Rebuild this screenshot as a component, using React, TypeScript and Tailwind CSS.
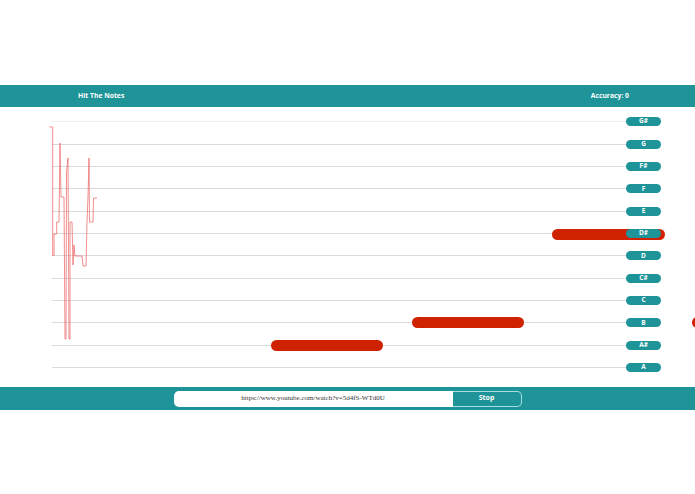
import React from "react";

const notes = ["G#", "G", "F#", "F", "E", "D#", "D", "C#", "C", "B", "A#", "A"];

// target notes scrolling toward the keys (x, top, width) in chart space
const targets = [
  { x: 552, top: 122, w: 113 },
  { x: 412, top: 210, w: 112 },
  { x: 271, top: 233, w: 112 },
  { x: 692, top: 210, w: 112 },
];

const trace =
  "49.3,20 52.7,20 52.7,148.7 54,148.7 54,127 56.7,127 56.7,115 59,115 60,36 61,90 64,90 65,232 66,232 66.5,65 68,51 69,232 70,232 70,115 72,115 73,158 74,138 75,149 82,149 83,159 86,159 87,115 88,90 89,51 89.5,115 93,115 93.5,91 97,91";

const App = () => {
  return (
    <div
      className="w-[695px] h-[494px] overflow-hidden bg-white pt-[85px]"
      style={{ fontFamily: '"Open Sans", "Liberation Sans", sans-serif' }}
    >
      <div className="h-[22px] bg-[#1e9499] flex items-center justify-between pl-[78px] pr-[66px] text-white text-[6.8px] font-bold">
        <span>Hit The Notes</span>
        <span>Accuracy: 0</span>
      </div>

      <div className="relative h-[280px] pt-[3.5px]">
        {notes.map((n, i) => (
          <div key={n} className="h-[22.36px] flex items-center pl-[52px] pr-[34px]">
            <div className={`flex-1 h-px ${i === 0 ? "bg-[#eeeeee]" : "bg-[#dadada]"}`} />
            <div className="relative z-10 w-[35px] h-[9px] rounded-full bg-[#1e9499] text-white text-[6.5px] font-bold flex items-center justify-center leading-none">
              {n}
            </div>
          </div>
        ))}

        {targets.map((t, i) => (
          <div
            key={i}
            className="absolute h-[11px] rounded-full bg-[#cf2200]"
            style={{ left: t.x, top: t.top, width: t.w }}
          />
        ))}

        <svg className="absolute left-0 top-0" width="695" height="280">
          <polyline
            points={trace}
            fill="none"
            stroke="#ec6b6b"
            strokeWidth="0.9"
            strokeOpacity="0.85"
          />
        </svg>
      </div>

      <div className="h-[23px] bg-[#1e9499] flex items-center justify-center">
        <div className="w-[279px] h-[16px] bg-white rounded-l-[5px] flex items-center justify-center text-[7px] text-[#333]" style={{ fontFamily: '"Liberation Serif", serif' }}>
          https://www.youtube.com/watch?v=5d4fS-WTd0U
        </div>
        <div className="w-[69px] h-[16px] rounded-r-[5px] border border-l-0 border-[#a8dcde] flex items-center justify-center text-white text-[7px] font-bold">
          Stop
        </div>
      </div>
    </div>
  );
};

export default App;
